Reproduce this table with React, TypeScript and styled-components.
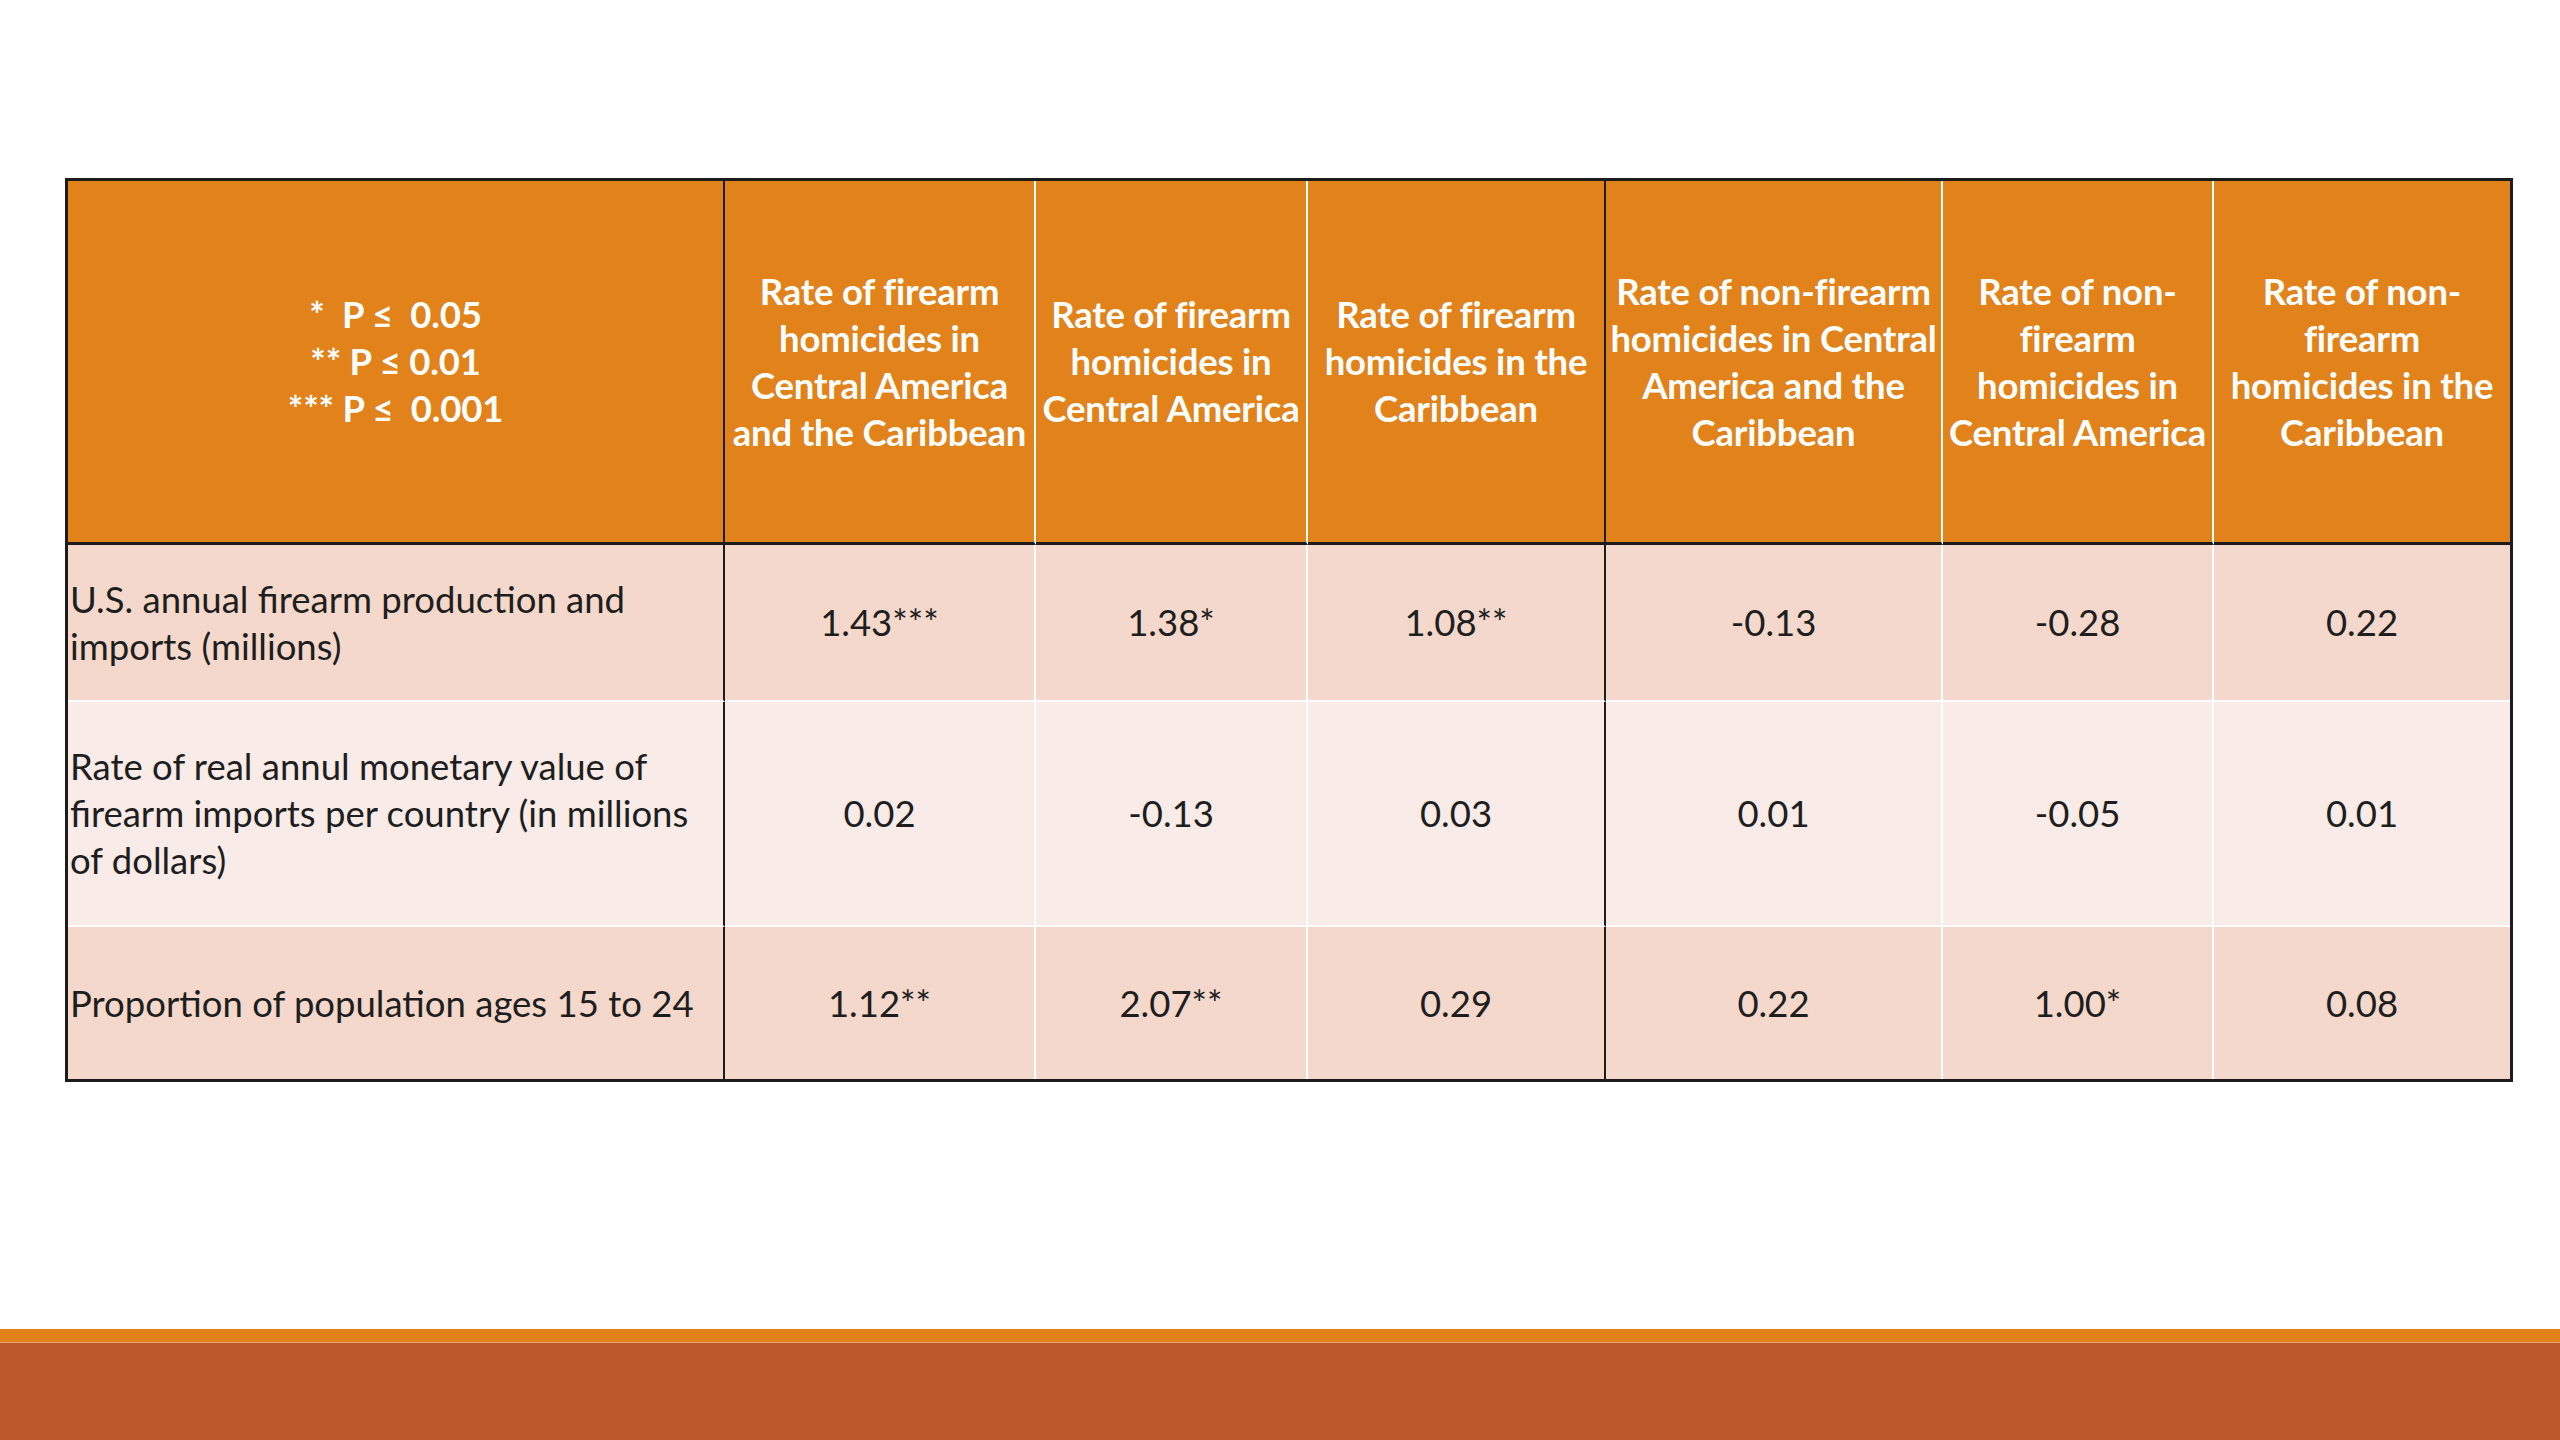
import React from "react";
import styled, { createGlobalStyle } from "styled-components";

const GlobalStyle = createGlobalStyle`
  html, body {
    margin: 0;
    padding: 0;
    background: #ffffff;
  }
  body {
    font-family: "Lato", "Open Sans", "Liberation Sans", sans-serif;
  }
`;

const Slide = styled.div`
  width: 2560px;
  height: 1440px;
  display: flex;
  flex-direction: column;
  background: #ffffff;
  overflow: hidden;
`;

const TableArea = styled.div`
  padding: 178px 51px 0 65px;
  flex: 1;
`;

const Table = styled.table`
  width: 2444px;
  table-layout: fixed;
  border-collapse: separate;
  border-spacing: 0;
  border: 3px solid #1c1c1c;
  font-family: "Lato", "Open Sans", sans-serif;
`;

const HeadCell = styled.th<{ $dark?: boolean; $last?: boolean }>`
  height: 361px;
  padding: 0;
  background: #e1821a;
  color: #ffffff;
  font-weight: 700;
  font-size: 36.5px;
  line-height: 47px;
  text-align: center;
  vertical-align: middle;
  white-space: nowrap;
  letter-spacing: -0.2px;
  border-bottom: 3px solid #1c1c1c;
  border-right: ${(p) =>
    p.$last ? "none" : p.$dark ? "2px solid #1c1c1c" : "2px solid #ffffff"};
`;

const Legend = styled.span`
  white-space: pre;
`;

const Row = styled.tr<{ $tone: "warm" | "pale" }>`
  background: ${(p) => (p.$tone === "warm" ? "#f4d8cb" : "#f9ebe7")};
`;

const Cell = styled.td<{
  $dark?: boolean;
  $last?: boolean;
  $bottom?: boolean;
  $h: number;
  $label?: boolean;
}>`
  height: ${(p) => p.$h}px;
  padding: ${(p) => (p.$label ? "0 4px 0 2px" : "0")};
  color: #1e1e1e;
  font-size: 36.5px;
  line-height: 47px;
  letter-spacing: 0;
  text-align: ${(p) => (p.$label ? "left" : "center")};
  vertical-align: middle;
  white-space: nowrap;
  border-bottom: ${(p) => (p.$bottom ? "2px solid #ffffff" : "none")};
  border-right: ${(p) =>
    p.$last ? "none" : p.$dark ? "2px solid #1c1c1c" : "2px solid #ffffff"};
`;

const Footer = styled.div`
  display: flex;
  flex-direction: column;
`;

const AccentLine = styled.div`
  height: 13px;
  background: #e1821a;
  border-bottom: 1px solid #eaa36c;
`;

const RustBar = styled.div`
  height: 97px;
  background: #bd582c;
`;

const colWidths = [657, 311, 272, 298, 337, 271, 296];

const headers: string[][] = [
  ["Rate of firearm", "homicides in", "Central America", "and the Caribbean"],
  ["Rate of firearm", "homicides in", "Central America"],
  ["Rate of firearm", "homicides in the", "Caribbean"],
  ["Rate of non-firearm", "homicides in Central", "America and the", "Caribbean"],
  ["Rate of non-", "firearm", "homicides in", "Central America"],
  ["Rate of non-", "firearm", "homicides in the", "Caribbean"],
];

const rows: { label: string[]; values: string[]; h: number; tone: "warm" | "pale" }[] = [
  {
    label: ["U.S. annual firearm production and", "imports (millions)"],
    values: ["1.43***", "1.38*", "1.08**", "-0.13", "-0.28", "0.22"],
    h: 155,
    tone: "warm",
  },
  {
    label: [
      "Rate of real annul monetary value of",
      "firearm imports per country (in millions",
      "of dollars)",
    ],
    values: ["0.02", "-0.13", "0.03", "0.01", "-0.05", "0.01"],
    h: 223,
    tone: "pale",
  },
  {
    label: ["Proportion of population ages 15 to 24"],
    values: ["1.12**", "2.07**", "0.29", "0.22", "1.00*", "0.08"],
    h: 152,
    tone: "warm",
  },
];

const Lines: React.FC<{ lines: string[] }> = ({ lines }) => (
  <>
    {lines.map((l, i) => (
      <React.Fragment key={i}>
        {i > 0 && <br />}
        {l}
      </React.Fragment>
    ))}
  </>
);

export default function App() {
  return (
    <>
      <GlobalStyle />
      <Slide>
        <TableArea>
          <Table>
            <colgroup>
              {colWidths.map((w, i) => (
                <col key={i} style={{ width: w }} />
              ))}
            </colgroup>
            <thead>
              <tr>
                <HeadCell $dark>
                  <Legend>{"*  P ≤  0.05\n** P ≤ 0.01\n*** P ≤  0.001"}</Legend>
                </HeadCell>
                {headers.map((h, i) => (
                  <HeadCell key={i} $dark={i === 2} $last={i === headers.length - 1}>
                    <Lines lines={h} />
                  </HeadCell>
                ))}
              </tr>
            </thead>
            <tbody>
              {rows.map((r, ri) => (
                <Row key={ri} $tone={r.tone}>
                  <Cell $label $dark $h={r.h} $bottom={ri < rows.length - 1}>
                    <Lines lines={r.label} />
                  </Cell>
                  {r.values.map((v, vi) => (
                    <Cell
                      key={vi}
                      $h={r.h}
                      $dark={vi === 2}
                      $last={vi === r.values.length - 1}
                      $bottom={ri < rows.length - 1}
                    >
                      {v}
                    </Cell>
                  ))}
                </Row>
              ))}
            </tbody>
          </Table>
        </TableArea>
        <Footer>
          <AccentLine />
          <RustBar />
        </Footer>
      </Slide>
    </>
  );
}
